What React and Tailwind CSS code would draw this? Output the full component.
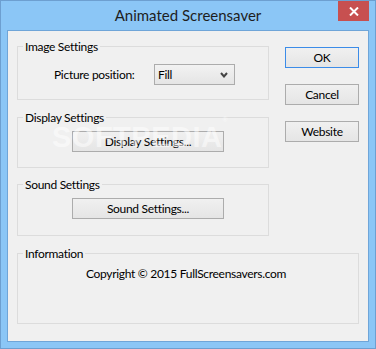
const font = "font-['Lato','Noto_Sans',sans-serif]"

function GroupBox({ label, className, children }) {
  return (
    <div className={`border border-[#dcdcdc] ${className}`}>
      <span className="block w-fit -mt-[8px] ml-[5px] px-[2px] bg-[#f0f0f0] leading-[15px]">{label}</span>
      {children}
    </div>
  )
}

function Button({ children, primary, className = '' }) {
  return (
    <button
      className={`h-[21px] border leading-[19px] text-[12px] tracking-[-0.3px] text-black bg-gradient-to-b from-[#f0f0f0] to-[#e5e5e5] ${primary ? 'border-[#3c8ce8]' : 'border-[#acacac]'} ${className}`}
    >
      {children}
    </button>
  )
}

export default function App() {
  return (
    <div className={`w-[376px] h-[349px] bg-[#8bc6f6] border border-[#6d9fd0] flex flex-col text-[12px] tracking-[-0.3px] text-black ${font}`}>
      {/* title bar */}
      <div className="relative h-[29px] flex items-center justify-center">
        <span className="text-[15px] text-[#1e1e1e] leading-none mb-[1px] tracking-normal">Animated Screensaver</span>
        <div className="absolute top-0 right-[6px] w-[31px] h-[20px] bg-[#c75050] flex items-center justify-center">
          <svg width="10" height="9" viewBox="0 0 10 9">
            <path d="M1 0.5 L9 8.5 M9 0.5 L1 8.5" stroke="#fff" strokeWidth="2" />
          </svg>
        </div>
      </div>

      {/* client area */}
      <div className="relative mx-[6px] h-[312px] border border-[#6fa5d8] bg-[#f0f0f0] pl-[9px] pr-[9px] pt-[15px]">
        <div className="flex gap-[16px]">
          <div className="w-[252px] flex flex-col">
            <GroupBox label="Image Settings" className="h-[54px]">
              <div className="mt-[10px] pl-[36px] flex items-center">
                <span className="w-[100px]">Picture position:</span>
                <div className="w-[81px] h-[21px] border border-[#acacac] bg-gradient-to-b from-[#f2f2f2] to-[#e5e5e5] flex items-center justify-between pl-[3px] pr-[6px]">
                  <span className="leading-none">Fill</span>
                  <svg width="8" height="6" viewBox="0 0 8 6">
                    <path d="M1 1 L4 4.5 L7 1" stroke="#444" strokeWidth="2" fill="none" />
                  </svg>
                </div>
              </div>
            </GroupBox>

            <GroupBox label="Display Settings" className="h-[51px] mt-[17px]">
              <Button className="mt-[6px] ml-[54px] w-[152px] block">Display Settings...</Button>
            </GroupBox>

            <GroupBox label="Sound Settings" className="h-[52px] mt-[16px]">
              <Button className="mt-[6px] ml-[54px] w-[152px] block">Sound Settings...</Button>
            </GroupBox>
          </div>

          <div className="w-[74px] flex flex-col gap-[16px] pt-[1px]">
            <Button primary className="w-full">OK</Button>
            <Button className="w-full">Cancel</Button>
            <Button className="w-full">Website</Button>
          </div>
        </div>

        <GroupBox label="Information" className="h-[71px] w-[342px] mt-[17px]">
          <p className="mt-[5px] pr-[4px] text-center leading-[15px]">Copyright © 2015 FullScreensavers.com</p>
        </GroupBox>

        {/* watermark */}
        <span className="absolute left-[44px] top-[92px] pointer-events-none font-['Liberation_Sans',sans-serif] font-bold text-[29px] leading-none text-white/50 tracking-[0.5px]">
          SOFTPEDIA<sup className="text-[7px] align-top">®</sup>
        </span>
      </div>
    </div>
  )
}
